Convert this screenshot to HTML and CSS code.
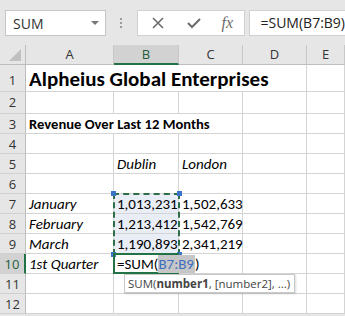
FILE: index.html
```html
<!DOCTYPE html>
<html lang="en">
<head>
    <meta charset="UTF-8">
    <title>Revenue - Excel</title>
    <link rel="stylesheet" href="styles.css">
</head>
<body>
    <div class="toolbar">
        <div class="name-box">
            <span>SUM</span>
            <span class="drop"></span>
        </div>
        <div class="dots"><i></i><i></i><i></i></div>
        <div class="fx-buttons">
            <svg class="icon" width="14" height="14" viewBox="0 0 14 14">
                <path d="M2 2 L12 12 M12 2 L2 12" stroke="#6b6b6b" stroke-width="1.6" fill="none"/>
            </svg>
            <svg class="icon" width="14" height="14" viewBox="0 0 14 14">
                <path d="M1 7 L5 11 L13 3" stroke="#6b6b6b" stroke-width="2" fill="none"/>
            </svg>
            <span class="fx">fx</span>
        </div>
        <div class="formula">=SUM(B7:B9)</div>
    </div>

    <div class="sheet">
        <div class="corner"><span class="tri"></span></div>
        <div class="col-head">A</div>
        <div class="col-head active">B</div>
        <div class="col-head">C</div>
        <div class="col-head">D</div>
        <div class="col-head">E</div>

        <!-- row 1 -->
        <div class="row-head r1">1</div>
        <div class="cell title span4">Alpheius Global Enterprises</div>
        <div class="cell"></div>

        <!-- row 2 -->
        <div class="row-head r2">2</div>
        <div class="cell"></div><div class="cell"></div><div class="cell"></div><div class="cell"></div><div class="cell"></div>

        <!-- row 3 -->
        <div class="row-head">3</div>
        <div class="cell bold span3">Revenue Over Last 12 Months</div>
        <div class="cell"></div><div class="cell"></div>

        <!-- row 4 -->
        <div class="row-head">4</div>
        <div class="cell"></div><div class="cell"></div><div class="cell"></div><div class="cell"></div><div class="cell"></div>

        <!-- row 5 -->
        <div class="row-head">5</div>
        <div class="cell"></div>
        <div class="cell ital">Dublin</div>
        <div class="cell ital">London</div>
        <div class="cell"></div><div class="cell"></div>

        <!-- row 6 -->
        <div class="row-head">6</div>
        <div class="cell"></div><div class="cell"></div><div class="cell"></div><div class="cell"></div><div class="cell"></div>

        <!-- row 7 -->
        <div class="row-head">7</div>
        <div class="cell ital">January</div>
        <div class="cell num sel">1,013,231</div>
        <div class="cell num">1,502,633</div>
        <div class="cell"></div><div class="cell"></div>

        <!-- row 8 -->
        <div class="row-head">8</div>
        <div class="cell ital">February</div>
        <div class="cell num sel">1,213,412</div>
        <div class="cell num">1,542,769</div>
        <div class="cell"></div><div class="cell"></div>

        <!-- row 9 -->
        <div class="row-head">9</div>
        <div class="cell ital">March</div>
        <div class="cell num sel">1,190,893</div>
        <div class="cell num">2,341,219</div>
        <div class="cell"></div><div class="cell"></div>

        <!-- row 10 -->
        <div class="row-head active">10</div>
        <div class="cell ital">1st Quarter</div>
        <div class="cell editing">=SUM(<span class="ref">B7:B9</span>)</div>
        <div class="cell"></div><div class="cell"></div><div class="cell"></div>

        <!-- row 11 -->
        <div class="row-head">11</div>
        <div class="cell"></div><div class="cell"></div><div class="cell"></div><div class="cell"></div><div class="cell"></div>

        <!-- row 12 -->
        <div class="row-head">12</div>
        <div class="cell"></div><div class="cell"></div><div class="cell"></div><div class="cell"></div><div class="cell"></div>

        <!-- marching ants round B7:B9 -->
        <div class="ants">
            <span class="handle tl"></span>
            <span class="handle tr"></span>
            <span class="handle bl"></span>
            <span class="handle br"></span>
        </div>

        <div class="tip">SUM(<b>number1</b>, [number2], ...)</div>
    </div>
</body>
</html>
```

FILE: styles.css
```css
body {
    margin: 0;
    background-color: #e6e6e6;
    font-family: 'Open Sans', 'Noto Sans', sans-serif;
    overflow: hidden;
}

/* barra de formulas */
.toolbar {
    display: flex;
    align-items: center;
    height: 26px;
    padding: 10px 0 9px 5px;
}
.name-box {
    background-color: #fff;
    border: 1px solid #c6c6c6;
    display: flex;
    align-items: center;
    justify-content: space-between;
    padding: 0 6px 0 7px;
    box-sizing: border-box;
    width: 102px;
    height: 26px;
    font-size: 14px;
    color: #333;
}
.drop {
    width: 0;
    height: 0;
    border-left: 4px solid transparent;
    border-right: 4px solid transparent;
    border-top: 4px solid #777;
}
.dots {
    width: 31px;
    display: flex;
    flex-direction: column;
    align-items: center;
    gap: 2px;
}
.dots i {
    width: 2px;
    height: 2px;
    background-color: #9a9a9a;
}
.fx-buttons {
    width: 110px;
    height: 26px;
    background-color: #fff;
    border: 1px solid #d0d0d0;
    box-sizing: border-box;
    display: flex;
    align-items: center;
    padding-left: 13px;
    gap: 22px;
}
.fx {
    font-family: 'Liberation Serif', serif;
    font-style: italic;
    font-size: 16px;
    color: #6b6b6b;
    margin-left: -1px;
}
.formula {
    flex: 1;
    margin-left: 4px;
    height: 26px;
    background-color: #fff;
    border: 1px solid #d0d0d0;
    border-right: none;
    box-sizing: border-box;
    padding-left: 10px;
    font-size: 14px;
    line-height: 24px;
    color: #222;
}

/* hoja */
.sheet {
    position: relative;
    display: grid;
    grid-template-columns: 26px 88px 65px 64px 64px 38px;
    grid-template-rows: 20px 27px 22px repeat(10, 20px);
    background-color: #fff;
    font-family: Calibri, Carlito, Lato, sans-serif;
    font-size: 15px;
    color: #000;
}
.corner {
    background-color: #e6e6e6;
    border-right: 1px solid #bdbdbd;
    border-bottom: 1px solid #bdbdbd;
    position: relative;
}
.tri {
    position: absolute;
    right: 4px;
    bottom: 3px;
    width: 0;
    height: 0;
    border-left: 12px solid transparent;
    border-bottom: 12px solid #c0c0c0;
}
.col-head {
    background-color: #e6e6e6;
    border-right: 1px solid #c8c8c8;
    border-bottom: 1px solid #bdbdbd;
    text-align: center;
    font-family: 'Open Sans', 'Noto Sans', sans-serif;
    font-size: 13px;
    line-height: 19px;
    color: #333;
}
.col-head.active {
    background-color: #d2d2d2;
    border-bottom: 2px solid #217346;
    color: #1e5e3b;
    line-height: 18px;
}
.row-head {
    background-color: #e6e6e6;
    border-right: 1px solid #bdbdbd;
    border-bottom: 1px solid #d0d0d0;
    text-align: center;
    font-family: 'Open Sans', 'Noto Sans', sans-serif;
    font-size: 13px;
    line-height: 20px;
    color: #333;
}
.row-head.r1 { line-height: 30px; }
.row-head.active {
    background-color: #d2d2d2;
    border-right: 2px solid #217346;
    color: #1e5e3b;
}
.cell {
    border-right: 1px solid #d4d4d4;
    border-bottom: 1px solid #d4d4d4;
    padding: 0 3px;
    white-space: nowrap;
    line-height: 20px;
    overflow: visible;
}
.span4 { grid-column: span 4; }
.span3 { grid-column: span 3; }
.title {
    font-size: 21px;
    font-weight: bold;
    line-height: 29px;
}
.bold { font-weight: bold; font-size: 14.6px; }
.ital { font-style: italic; }
.num { text-align: right; }
.sel { background-color: #e8edf6; }
.editing {
    position: relative;
    z-index: 2;
    border: 2px solid #217346;
    margin: -1px 0 0 -1px;
    padding-left: 2px;
    line-height: 18px;
}
.ref {
    background-color: #c6c6c6;
    color: #3d6fc1;
    padding-right: 1px;
}

/* seleccion punteada */
.ants {
    position: absolute;
    left: 113px;
    top: 148px;
    width: 63px;
    height: 58px;
    border: 2px dashed #2d6e46;
    z-index: 1;
}
.handle {
    position: absolute;
    width: 5px;
    height: 5px;
    background-color: #3b74c8;
}
.handle.tl { left: -4px; top: -4px; }
.handle.tr { right: -4px; top: -4px; }
.handle.bl { left: -4px; bottom: -4px; }
.handle.br { right: -4px; bottom: -4px; }

.tip {
    position: absolute;
    left: 124px;
    top: 229px;
    height: 19px;
    box-sizing: border-box;
    background-color: #fff;
    border: 1px solid #c8c8c8;
    box-shadow: 1px 1px 2px rgba(0, 0, 0, 0.15);
    font-family: 'Open Sans', 'Noto Sans', sans-serif;
    font-size: 11.5px;
    line-height: 17px;
    padding: 0 4px 0 3px;
    white-space: nowrap;
    color: #444;
    z-index: 3;
}
```
